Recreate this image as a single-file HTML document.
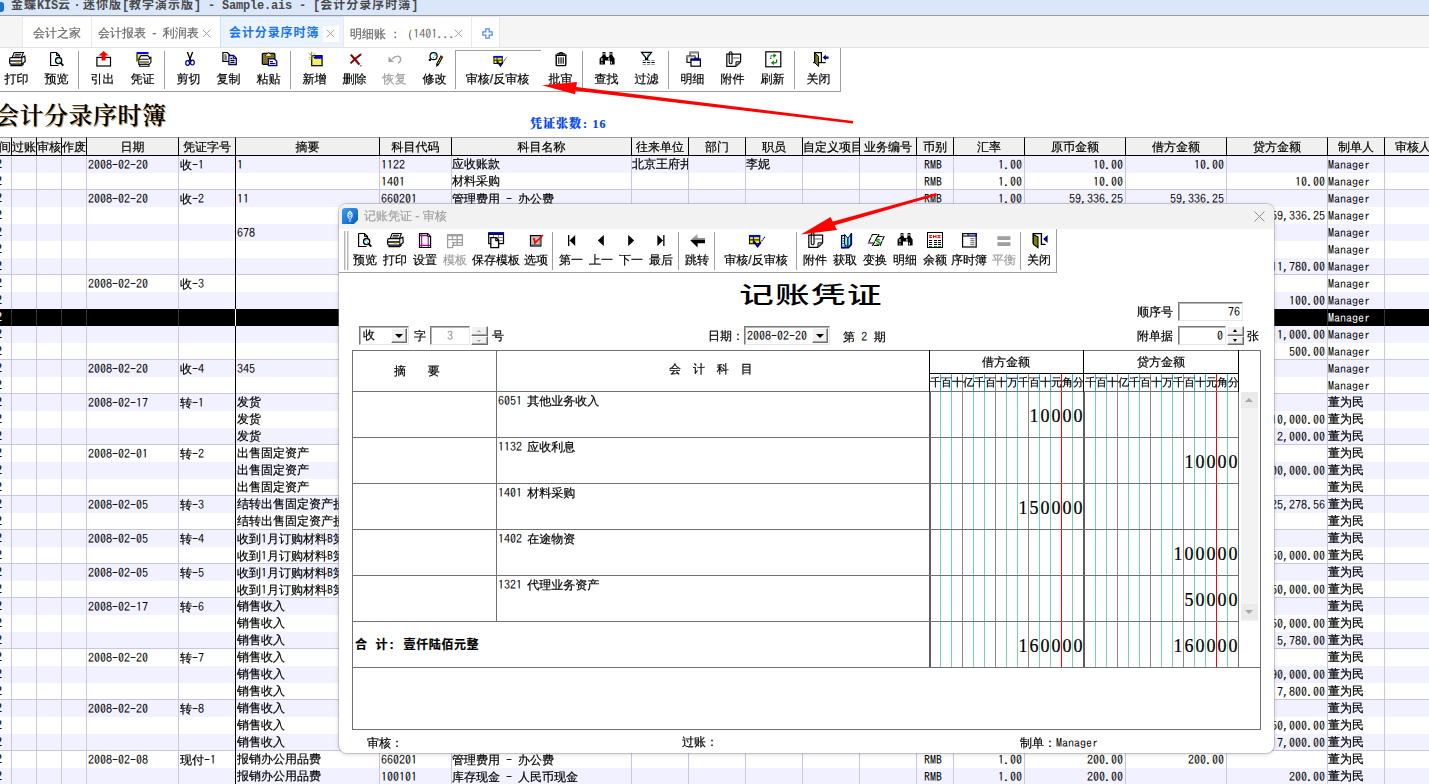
<!DOCTYPE html><html lang="zh"><head><meta charset="utf-8"><title>会计分录序时簿</title><style>
*{box-sizing:border-box;margin:0;padding:0}
html,body{width:1429px;height:784px;overflow:hidden;background:#fff}
body{position:relative;font:12px/12px "Liberation Sans","WenQuanYi Zen Hei","Noto Sans CJK SC",sans-serif;color:#000;-webkit-text-stroke:.2px currentColor}
.abs{position:absolute}
.t{position:absolute;white-space:nowrap;line-height:14px;height:14px}
.ser{font-family:"Liberation Serif","WenQuanYi Zen Hei","Noto Sans CJK SC",serif}
#titlebar{position:absolute;left:0;top:0;width:1429px;height:15px;background:#dae7fb;overflow:hidden}
#ttl,.tab.act,#bigt{-webkit-text-stroke:0}
#ttl i{font-style:normal;letter-spacing:-.2px}#ttl b{display:inline-block;width:12px;text-align:center;letter-spacing:0}
#titleline{position:absolute;left:0;top:15px;width:1429px;height:1px;background:#9c9c9c}
#tabstrip{position:absolute;left:0;top:16px;width:1429px;height:32px;background:#f5f5f5;border-bottom:1px solid #e3e3e3}
.tab{position:absolute;top:0;height:31px;background:#fff;border:1px solid #e9e9e9;border-bottom:none;color:#6a6a6a;line-height:33px;white-space:nowrap}
.tab.act{background:#ebf4fe;border-color:#c9e0f8;color:#1b76e6;font:bold 12px/33px "Liberation Sans","Noto Sans CJK SC",sans-serif;letter-spacing:.9px}
.tab .x{position:absolute;top:0;font-size:17px;color:#8a8a8a;font-weight:normal;letter-spacing:0}
#tb{position:absolute;left:0;top:48px;width:841px;height:44px;background:#fff;border-right:1px solid #a0a0a0;border-bottom:1px solid #a0a0a0}
.btn{position:absolute;top:0;height:43px;text-align:center}
.btn .lb{position:absolute;left:-20px;right:-20px;top:24px;line-height:14px;text-align:center;white-space:nowrap}
.btn svg{position:absolute;top:3px;left:50%;margin-left:-8px;width:16px;height:16px;overflow:visible}
.btn.dis{color:#a0a0a0}
.sep{position:absolute;width:1px;background:#a0a0a0}
/* grid */
.gh{position:absolute;top:137px;height:19px;background:#f0f0f0;border-top:1px solid #a0a0a0;border-bottom:1px solid #000;border-right:1px solid #000;text-align:center;line-height:18px;white-space:nowrap;overflow:hidden}
.row{position:absolute;left:0;width:1429px;height:17px}
.row.l{background:#f1f1ff}
.row.sel{background:#000;color:#fff}
.c{position:absolute;top:0;height:17px;line-height:17px;white-space:nowrap;overflow:hidden;word-spacing:2.7px}
.vl{position:absolute;top:156px;width:1px;height:628px;background:#c9c6e2}
.hl{position:absolute;left:0;width:1429px;height:1px;background:#c9c6e2}
.num{font-family:"IPAGothic","Liberation Mono",monospace;font-size:12px;text-align:right;-webkit-text-stroke:0}
.mono{font-family:"IPAGothic","Liberation Mono",monospace;font-size:12px;-webkit-text-stroke:0}
.m{font-family:"IPAGothic","Liberation Mono",monospace;font-size:12px;-webkit-text-stroke:0}
.xs{position:absolute;top:12px;width:9px;height:9px}
</style></head><body>
<div id="titlebar"><div class="abs" style="left:-4px;top:2px;width:8px;height:10px;border-radius:3px;background:#1c6fd0"></div><div class="t" id="ttl" style="left:11px;top:-1px;font:bold 12px/14px 'Liberation Mono','Noto Sans CJK SC',monospace;color:#4a4a4a;letter-spacing:1px">金蝶<i>KIS</i>云<b>·</b>迷你版<i>[</i>教学演示版<i>] - Sample.ais - [</i>会计分录序时簿<i>]</i></div></div><div id="titleline"></div>
<div id="tabstrip">
<div class="tab" style="left:22px;width:70px;padding-left:10px">会计之家</div>
<div class="tab" style="left:91px;width:130px;padding-left:6px;word-spacing:3px">会计报表 - 利润表<svg class="xs" style="left:110px" viewBox="0 0 10 10"><path d="M.8 .8L9.2 9.2M9.2 .8L.8 9.2" stroke="#9a9a9a" stroke-width="1" fill="none"/></svg></div>
<div class="tab act" style="left:220px;width:124px;padding-left:8px">会计分录序时簿<span class="abs" style="left:102px;top:9px;width:16px;height:16px;background:#fff"></span><svg class="xs" style="left:105px" viewBox="0 0 10 10"><path d="M.8 .8L9.2 9.2M9.2 .8L.8 9.2" stroke="#9a9a9a" stroke-width="1" fill="none"/></svg></div>
<div class="tab" style="left:343px;width:129px;padding-left:6px">明细账 ：（<span class="m">1401...</span><svg class="xs" style="left:110px" viewBox="0 0 10 10"><path d="M.8 .8L9.2 9.2M9.2 .8L.8 9.2" stroke="#9a9a9a" stroke-width="1" fill="none"/></svg></div>
<div class="tab" style="left:471px;width:29px"><svg class="abs" style="left:10px;top:11px" width="11" height="11" viewBox="0 0 13 13"><path d="M4.5 1H8.5V4.5H12V8.5H8.5V12H4.5V8.5H1V4.5H4.5Z" fill="#fff" stroke="#4c8be0" stroke-width="1.4"/></svg></div>
</div>
<div id="tb">
<div class="btn " style="left:-3.5px;width:40px"><svg viewBox="0 0 16 16" ><path d="M5.2 1.5H14.4L12.4 6.5H3.2Z" fill="#fff" stroke="#000" stroke-width="1.1"/><path d="M6 3.3H12M5.3 5H11.3" stroke="#000" stroke-width="1"/><path d="M2.2 6.6H12.6L15.8 5.2 16.2 10.4 12.8 13.2H2.2Q0.6 13.2 0.6 11.5V8.2Q0.6 6.6 2.2 6.6Z" fill="#fff" stroke="#000" stroke-width="1.2"/><path d="M12.8 6.8V13" stroke="#000" stroke-width="1"/><path d="M1 10H12.5" stroke="#000" stroke-width="1.3"/><path d="M2 13.2V14.6H12.6L14.6 12.8" fill="none" stroke="#000" stroke-width="1.2"/><rect x="7" y="10.8" width="3.2" height="1.2" fill="#e8d800"/></svg><span class="lb">打印</span></div>
<div class="btn " style="left:36.5px;width:40px"><svg viewBox="0 0 16 16" ><path d="M1.6 1.5H7.5L10.5 4.5V7M1.6 1.5V14.5H9.5" fill="none" stroke="#000" stroke-width="1.2"/><path d="M7.5 1.5V4.5H10.5" fill="none" stroke="#000" stroke-width="1"/><circle cx="9.6" cy="9.6" r="3.1" fill="#fff" stroke="#000" stroke-width="1.3"/><rect x="8.2" y="8" width="1.3" height="1.3" fill="#00e0e0"/><rect x="9.8" y="9.8" width="1.3" height="1.3" fill="#00e0e0"/><path d="M11.8 11.8L14.3 14.6" stroke="#000" stroke-width="1.8"/></svg><span class="lb">预览</span></div>
<div class="btn " style="left:82.5px;width:40px"><svg viewBox="0 0 16 16" ><rect x="1.9" y="6.4" width="13.6" height="8.6" fill="#fff" stroke="#000" stroke-width="1.2"/><path d="M8.6 0L13.8 4.6H10.6V9.6H6.6V4.6H3.4Z" fill="#ff0000"/></svg><span class="lb">引出</span></div>
<div class="btn " style="left:122.5px;width:40px"><svg viewBox="0 0 16 16" ><rect x="1.5" y="1" width="12" height="2.2" fill="#0000ff"/><rect x="1.5" y="3.2" width="12" height="7.3" fill="#e8e840"/><path d="M2 3V10.5" stroke="#000" stroke-width="1"/><path d="M6 4.6H12.6L14.6 6.4H15.9V11.4L14 13.4V15.2H4.6V13.4H3.8V8L6 4.6Z" fill="#fff" stroke="#000" stroke-width="1.1"/><path d="M4 8.2H13.6M4.6 11H14M13.8 8.2L15.6 6.6" stroke="#000" stroke-width="1.1" fill="none"/><rect x="8.5" y="11.8" width="3" height="1.3" fill="#e8d800"/><path d="M4.8 13.3H13.8" stroke="#000" stroke-width="1.2"/></svg><span class="lb">凭证</span></div>
<div class="btn " style="left:168.5px;width:40px"><svg viewBox="0 0 16 16" ><path d="M6.4 1L9 8M11.6 1L9 8M9 8L7.6 10.4M9 8L10.6 10.4" stroke="#000" stroke-width="1.3" fill="none"/><ellipse cx="6.6" cy="12" rx="1.9" ry="2.4" fill="none" stroke="#000090" stroke-width="1.2"/><ellipse cx="11.4" cy="11.6" rx="1.9" ry="2.4" fill="none" stroke="#000090" stroke-width="1.2"/></svg><span class="lb">剪切</span></div>
<div class="btn " style="left:208.5px;width:40px"><svg viewBox="0 0 16 16" ><path d="M1.9 1.5H6.3L8.6 3.8V10.3H1.9Z" fill="#fff" stroke="#000" stroke-width="1.2"/><path d="M3.3 4H5.5M3.3 6H6M3.3 8H6" stroke="#000" stroke-width="1"/><path d="M7.9 4.5H12.5L15.3 7.3V13.5H7.9Z" fill="#fff" stroke="#000080" stroke-width="1.3"/><path d="M12.3 4.6V7.4H15.2" fill="none" stroke="#000080" stroke-width="1"/><path d="M9.4 7.4H11.4M9.4 9.4H13.6M9.4 11.4H13.6" stroke="#000" stroke-width="1.1"/></svg><span class="lb">复制</span></div>
<div class="btn " style="left:248.5px;width:40px"><svg viewBox="0 0 16 16" ><rect x="1.3" y="2.4" width="12.6" height="11" rx="1" fill="#7c7420" stroke="#000" stroke-width="1.2"/><path d="M4.6 4.6L6.2 2.6Q7.6 0.6 9 2.6L10.6 4.6Z" fill="#f0e000" stroke="#000" stroke-width="1"/><rect x="5" y="3.6" width="5.4" height="1.2" fill="#fff"/><path d="M7.5 7.9H13.2L15.8 10.4V14.6H7.5Z" fill="#fff" stroke="#000080" stroke-width="1.3"/><path d="M9 10.6H12M9 12.6H14.4" stroke="#000080" stroke-width="1.2"/></svg><span class="lb">粘贴</span></div>
<div class="btn " style="left:294.5px;width:40px"><svg viewBox="0 0 16 16" ><rect x="4.7" y="4.7" width="10.4" height="10" fill="#f4f060" stroke="#000" stroke-width="1.2"/><rect x="8" y="5" width="7" height="2.8" fill="#0000ff"/><path d="M4.6 0.6V8.6M1.6 2.2L7.6 7M8.4 2.4L3 7.2" stroke="#707070" stroke-width=".8"/><rect x="2" y="2.4" width="1.2" height="1.2" fill="#e8d800"/><rect x="5.4" y="1.2" width="1.2" height="1.2" fill="#e8d800"/><rect x="1.8" y="6" width="1.2" height="1.2" fill="#e8d800"/><rect x="2.4" y="8" width="1" height="1" fill="#c0b000"/><rect x="7" y="6" width="1.4" height="1.4" fill="#000"/></svg><span class="lb">新增</span></div>
<div class="btn " style="left:334.5px;width:40px"><svg viewBox="0 0 16 16" ><path d="M3.8 3.6L7.6 8L12.4 13.6" stroke="#800000" stroke-width="2.1" fill="none"/><path d="M14 3.2L8 8L3.6 12.4" stroke="#800000" stroke-width="1.9" fill="none"/><path d="M12.6 4.2L14.4 2.8" stroke="#800000" stroke-width="1"/><rect x="13.2" y="14.2" width="1.2" height="1.2" fill="#800000"/></svg><span class="lb">删除</span></div>
<div class="btn dis" style="left:374.5px;width:40px"><svg viewBox="0 0 16 16" ><path d="M1.5 5.4V11H7.2Z" fill="#a4a4a4"/><path d="M5.2 8Q8 5 11 5.2Q13.7 5.6 13.7 8.3Q13.7 11 11 12.2" fill="none" stroke="#a4a4a4" stroke-width="1.3"/></svg><span class="lb">恢复</span></div>
<div class="btn " style="left:414.5px;width:40px"><svg viewBox="0 0 16 16" ><circle cx="6.6" cy="5.2" r="3.5" fill="#fff" stroke="#000" stroke-width="1.2"/><rect x="7.4" y="2.6" width="1.4" height="2.4" fill="#00e0e0"/><rect x="5.8" y="6" width="1.2" height="1.2" fill="#00e0e0"/><rect x="1.8" y="8" width="2" height="2" fill="#000"/><path d="M14 5L15.4 6.2L11.4 13.6L9.8 14.8L9.9 12.6Z" fill="#f0e000" stroke="#000" stroke-width="1.1"/><path d="M9.9 12.8L9.6 15.2L11.4 13.8Z" fill="#000"/><path d="M13.6 5.2L15.2 6.4" stroke="#c00000" stroke-width="1.2"/></svg><span class="lb">修改</span></div>
<div class="btn " style="left:454.5px;width:86px"><svg viewBox="0 0 16 16" ><g transform="translate(2.7 2.4) scale(.81 .86)"><rect x="1.5" y="3.5" width="10.2" height="8.2" fill="#f4ec00" stroke="#000" stroke-width="1.1"/><rect x="1" y="3" width="11.2" height="2.1" fill="#0000ff"/><path d="M1.5 7.9H11.7M5.4 5V11.6" stroke="#000" stroke-width="1"/><path d="M5.6 9.2L9.6 14.4L12.6 10.4" stroke="#000090" stroke-width="2" fill="none"/><path d="M12.4 10.6L17 4.8" stroke="#000090" stroke-width="1.1" stroke-dasharray="1.4 .6" fill="none"/></g></svg><span class="lb">审核/反审核</span></div>
<div class="btn " style="left:540.5px;width:40px"><svg viewBox="0 0 16 16" ><path d="M2.4 4.2H13.6" stroke="#000" stroke-width="1.6"/><path d="M5.6 2.6Q8 0.6 10.4 2.6" stroke="#000" stroke-width="1.3" fill="none"/><path d="M4 2.8H12" stroke="#000" stroke-width="1.1"/><path d="M3.2 5V13.4Q3.2 14.6 4.4 14.6H11.6Q12.8 14.6 12.8 13.4V5" fill="#fff" stroke="#000" stroke-width="1.4"/><path d="M5.8 6.2V12.8M8 6.2V12.8M10.2 6.2V12.8" stroke="#000" stroke-width="1.1"/></svg><span class="lb">批审</span></div>
<div class="btn " style="left:586.5px;width:40px"><svg viewBox="0 0 16 16" ><path d="M3.6 1H6.4V4L7.4 6H9.6L10.6 4V1H13.4V4.4L15.6 7.4V13.6H11V9.4H6V13.6H0.6V7.4L3.6 4.4Z" fill="#000"/><rect x="4.4" y="2" width="1.1" height="1.6" fill="#fff"/><rect x="11.4" y="2" width="1.1" height="1.6" fill="#fff"/><rect x="2.4" y="7" width="1.1" height="3" fill="#fff"/><rect x="9.4" y="6.6" width="1.1" height="2.4" fill="#fff"/><rect x="2.4" y="11.4" width="1.1" height="1.2" fill="#fff"/><rect x="11.8" y="10.6" width="1.1" height="2" fill="#fff"/></svg><span class="lb">查找</span></div>
<div class="btn " style="left:626.5px;width:40px"><svg viewBox="0 0 16 16" ><path d="M2.6 1.3H12.4L8.6 6.4V8.6H6.6V6.4Z" fill="#fff" stroke="#000" stroke-width="1.3"/><path d="M8.4 5L9.6 2.4" stroke="#00c0c0" stroke-width="1"/><path d="M7 7.6H8.4" stroke="#000" stroke-width="1.6"/><path d="M3.6 9.5H15.6M3.6 13.5H15.6" stroke="#909090" stroke-width="1" stroke-dasharray="3.2 1.2"/><path d="M3.6 11.5H15.6" stroke="#000" stroke-width="1.1" stroke-dasharray="3.2 1.2"/></svg><span class="lb">过滤</span></div>
<div class="btn " style="left:672.5px;width:40px"><svg viewBox="0 0 16 16" ><rect x="5" y="1.2" width="8.4" height="6" fill="#fff" stroke="#000" stroke-width="1"/><rect x="4.6" y="0.8" width="9.2" height="1.8" fill="#8c8c8c"/><rect x="2" y="5" width="8" height="6.4" fill="#fff" stroke="#000" stroke-width="1.1"/><rect x="1.6" y="4.6" width="8.2" height="1.8" fill="#8c8c8c"/><rect x="6" y="8.2" width="9.4" height="7" fill="#fff" stroke="#000" stroke-width="1.2"/><rect x="5.6" y="7.6" width="10.2" height="2.2" fill="#000080"/></svg><span class="lb">明细</span></div>
<div class="btn " style="left:712.5px;width:40px"><svg viewBox="0 0 16 16" ><path d="M1.8 3.2H15.6V10.6L10.6 15.4H1.8Z" fill="#fff" stroke="#000" stroke-width="1.2"/><path d="M15.4 10.8H11V15" fill="none" stroke="#000" stroke-width="1"/><path d="M11 15.2L15.6 10.8" stroke="#404040" stroke-width="1.6"/><path d="M4.2 9V2.2Q4.2 0.8 5.6 0.8Q7 0.8 7 2.2V11.4Q7 12.8 5.8 12.8Q4.2 12.8 4.2 11.2V9" fill="none" stroke="#000" stroke-width="1.1"/><path d="M8.2 7H14.6M7.6 5.6V11.6" stroke="#606060" stroke-width="1"/></svg><span class="lb">附件</span></div>
<div class="btn " style="left:752.5px;width:40px"><svg viewBox="0 0 16 16" ><rect x="0.8" y="0.8" width="15" height="15" fill="#fff" stroke="#000" stroke-width="1.2"/><path d="M5.6 8V6Q5.6 4.6 7 4.6H9" fill="none" stroke="#008000" stroke-width="1.3" stroke-dasharray="1.6 .7"/><path d="M8.6 2.2L11.4 4.6L8.6 7Z" fill="#008000"/><path d="M11.6 8.4V10.4Q11.6 11.8 10.2 11.8H8.6" fill="none" stroke="#008000" stroke-width="1.3"/><path d="M8.8 9.4L6 11.8L8.8 14.2Z" fill="#008000"/></svg><span class="lb">刷新</span></div>
<div class="btn " style="left:798.5px;width:40px"><svg viewBox="0 0 16 16" ><path d="M3.6 11.6V1.6H10.4V11.6" fill="#fff" stroke="#000" stroke-width="1.2"/><path d="M2 11.6H14.6" stroke="#000" stroke-width="1.2"/><path d="M3.8 2.2L7.6 5.4V15.4L3.8 11.8Z" fill="#808000" stroke="#000" stroke-width="1"/><path d="M11.8 6.6L14.8 3.6V5.4H17.6V7.8H14.8V9.6Z" fill="#000090"/></svg><span class="lb">关闭</span></div>
<div class="sep" style="left:78px;top:3px;height:38px"></div>
<div class="sep" style="left:164px;top:3px;height:38px"></div>
<div class="sep" style="left:290px;top:3px;height:38px"></div>
<div class="sep" style="left:582px;top:3px;height:38px"></div>
<div class="sep" style="left:668px;top:3px;height:38px"></div>
<div class="sep" style="left:794px;top:3px;height:38px"></div>
<div class="abs" style="left:455px;top:2px;width:86px;height:39px;border-left:1px solid #a0a0a0;border-top:1px solid #a0a0a0"></div>
</div>
<div class="t" style="left:-5px;top:100px;height:32px;line-height:32px;font:600 24px/32px 'Liberation Serif','Noto Serif CJK SC',serif;letter-spacing:.5px;-webkit-text-stroke:0;text-shadow:1px 1px 0 #c9a46a">会计分录序时簿</div>
<div class="t" style="left:530px;top:116.5px;font:900 12px/14px 'Liberation Serif','Noto Serif CJK SC',serif;color:#0648e8;letter-spacing:1px">凭证张数<span style="font-weight:bold;letter-spacing:1.2px;padding-left:1px">: 16</span></div>
<div class="gh" style="left:-13px;width:25px">期间</div>
<div class="gh" style="left:12px;width:25px">过账</div>
<div class="gh" style="left:37px;width:25px">审核</div>
<div class="gh" style="left:62px;width:25px">作废</div>
<div class="gh" style="left:87px;width:92px">日期</div>
<div class="gh" style="left:179px;width:57px">凭证字号</div>
<div class="gh" style="left:236px;width:144px">摘要</div>
<div class="gh" style="left:380px;width:72px">科目代码</div>
<div class="gh" style="left:452px;width:180px">科目名称</div>
<div class="gh" style="left:632px;width:57px">往来单位</div>
<div class="gh" style="left:689px;width:57px">部门</div>
<div class="gh" style="left:746px;width:57px">职员</div>
<div class="gh" style="left:803px;width:57px">自定义项目</div>
<div class="gh" style="left:860px;width:57px">业务编号</div>
<div class="gh" style="left:917px;width:37px">币别</div>
<div class="gh" style="left:954px;width:71px">汇率</div>
<div class="gh" style="left:1025px;width:101px">原币金额</div>
<div class="gh" style="left:1126px;width:101px">借方金额</div>
<div class="gh" style="left:1227px;width:101px">贷方金额</div>
<div class="gh" style="left:1328px;width:57px">制单人</div>
<div class="gh" style="left:1385px;width:57px">审核人</div>
<div class="row l" style="top:156px"><span class="c" style="left:-12px;width:14px;text-align:right">2</span><span class="c mono" style="left:88px;width:90px">2008-02-20</span><span class="c" style="left:180px;width:55px">收<span class="m">-1</span></span><span class="c" style="left:237px;width:142px"><span class="m">1</span></span><span class="c mono" style="left:381px;width:70px">1122</span><span class="c" style="left:452px;width:179px">应收账款</span><span class="c" style="left:632px;width:56px">北京王府井</span><span class="c" style="left:746px;width:56px">李妮</span><span class="c mono" style="left:924px;width:29px">RMB</span><span class="c num" style="left:953px;width:69px">1.00</span><span class="c num" style="left:1024px;width:99px">10.00</span><span class="c num" style="left:1125px;width:99px">10.00</span><span class="c mono" style="left:1328px;width:56px">Manager</span></div>
<div class="row" style="top:173px"><span class="c" style="left:-12px;width:14px;text-align:right">2</span><span class="c mono" style="left:381px;width:70px">1401</span><span class="c" style="left:452px;width:179px">材料采购</span><span class="c mono" style="left:924px;width:29px">RMB</span><span class="c num" style="left:953px;width:69px">1.00</span><span class="c num" style="left:1024px;width:99px">10.00</span><span class="c num" style="left:1226px;width:99px">10.00</span><span class="c mono" style="left:1328px;width:56px">Manager</span></div>
<div class="row l" style="top:190px"><span class="c" style="left:-12px;width:14px;text-align:right">2</span><span class="c mono" style="left:88px;width:90px">2008-02-20</span><span class="c" style="left:180px;width:55px">收<span class="m">-2</span></span><span class="c" style="left:237px;width:142px"><span class="m">11</span></span><span class="c mono" style="left:381px;width:70px">660201</span><span class="c" style="left:452px;width:179px">管理费用 <span class="m">-</span> 办公费</span><span class="c mono" style="left:924px;width:29px">RMB</span><span class="c num" style="left:953px;width:69px">1.00</span><span class="c num" style="left:1024px;width:99px">59,336.25</span><span class="c num" style="left:1125px;width:99px">59,336.25</span><span class="c mono" style="left:1328px;width:56px">Manager</span></div>
<div class="row" style="top:207px"><span class="c" style="left:-12px;width:14px;text-align:right">2</span><span class="c mono" style="left:381px;width:70px">100201</span><span class="c" style="left:452px;width:179px">银行存款 <span class="m">-</span> 工行存款</span><span class="c mono" style="left:924px;width:29px">RMB</span><span class="c num" style="left:953px;width:69px">1.00</span><span class="c num" style="left:1024px;width:99px">59,336.25</span><span class="c num" style="left:1226px;width:99px">59,336.25</span><span class="c mono" style="left:1328px;width:56px">Manager</span></div>
<div class="row l" style="top:224px"><span class="c" style="left:-12px;width:14px;text-align:right">2</span><span class="c" style="left:237px;width:142px"><span class="m">678</span></span><span class="c mono" style="left:381px;width:70px">660202</span><span class="c" style="left:452px;width:179px">管理费用 <span class="m">-</span> 差旅费</span><span class="c mono" style="left:924px;width:29px">RMB</span><span class="c num" style="left:953px;width:69px">1.00</span><span class="c num" style="left:1024px;width:99px">1,780.00</span><span class="c num" style="left:1125px;width:99px">1,780.00</span><span class="c mono" style="left:1328px;width:56px">Manager</span></div>
<div class="row" style="top:241px"><span class="c" style="left:-12px;width:14px;text-align:right">2</span><span class="c mono" style="left:381px;width:70px">660203</span><span class="c" style="left:452px;width:179px">管理费用 <span class="m">-</span> 招待费</span><span class="c mono" style="left:924px;width:29px">RMB</span><span class="c num" style="left:953px;width:69px">1.00</span><span class="c num" style="left:1024px;width:99px">10,000.00</span><span class="c num" style="left:1125px;width:99px">10,000.00</span><span class="c mono" style="left:1328px;width:56px">Manager</span></div>
<div class="row l" style="top:258px"><span class="c" style="left:-12px;width:14px;text-align:right">2</span><span class="c mono" style="left:381px;width:70px">100101</span><span class="c" style="left:452px;width:179px">库存现金 <span class="m">-</span> 人民币现金</span><span class="c mono" style="left:924px;width:29px">RMB</span><span class="c num" style="left:953px;width:69px">1.00</span><span class="c num" style="left:1024px;width:99px">11,780.00</span><span class="c num" style="left:1226px;width:99px">11,780.00</span><span class="c mono" style="left:1328px;width:56px">Manager</span></div>
<div class="row" style="top:275px"><span class="c" style="left:-12px;width:14px;text-align:right">2</span><span class="c mono" style="left:88px;width:90px">2008-02-20</span><span class="c" style="left:180px;width:55px">收<span class="m">-3</span></span><span class="c mono" style="left:381px;width:70px">6051</span><span class="c" style="left:452px;width:179px">其他业务收入</span><span class="c mono" style="left:924px;width:29px">RMB</span><span class="c num" style="left:953px;width:69px">1.00</span><span class="c num" style="left:1024px;width:99px">100.00</span><span class="c num" style="left:1125px;width:99px">100.00</span><span class="c mono" style="left:1328px;width:56px">Manager</span></div>
<div class="row l" style="top:292px"><span class="c" style="left:-12px;width:14px;text-align:right">2</span><span class="c mono" style="left:381px;width:70px">1132</span><span class="c" style="left:452px;width:179px">应收利息</span><span class="c mono" style="left:924px;width:29px">RMB</span><span class="c num" style="left:953px;width:69px">1.00</span><span class="c num" style="left:1024px;width:99px">100.00</span><span class="c num" style="left:1226px;width:99px">100.00</span><span class="c mono" style="left:1328px;width:56px">Manager</span></div>
<div class="row sel" style="top:309px"><span class="c" style="left:-12px;width:14px;text-align:right">2</span><span class="c mono" style="left:381px;width:70px">1401</span><span class="c" style="left:452px;width:179px">材料采购</span><span class="c mono" style="left:924px;width:29px">RMB</span><span class="c num" style="left:953px;width:69px">1.00</span><span class="c num" style="left:1024px;width:99px">1,500.00</span><span class="c num" style="left:1125px;width:99px">1,500.00</span><span class="c mono" style="left:1328px;width:56px">Manager</span></div>
<div class="row l" style="top:326px"><span class="c" style="left:-12px;width:14px;text-align:right">2</span><span class="c mono" style="left:381px;width:70px">1402</span><span class="c" style="left:452px;width:179px">在途物资</span><span class="c mono" style="left:924px;width:29px">RMB</span><span class="c num" style="left:953px;width:69px">1.00</span><span class="c num" style="left:1024px;width:99px">1,000.00</span><span class="c num" style="left:1226px;width:99px">1,000.00</span><span class="c mono" style="left:1328px;width:56px">Manager</span></div>
<div class="row" style="top:343px"><span class="c" style="left:-12px;width:14px;text-align:right">2</span><span class="c mono" style="left:381px;width:70px">1321</span><span class="c" style="left:452px;width:179px">代理业务资产</span><span class="c mono" style="left:924px;width:29px">RMB</span><span class="c num" style="left:953px;width:69px">1.00</span><span class="c num" style="left:1024px;width:99px">500.00</span><span class="c num" style="left:1226px;width:99px">500.00</span><span class="c mono" style="left:1328px;width:56px">Manager</span></div>
<div class="row l" style="top:360px"><span class="c" style="left:-12px;width:14px;text-align:right">2</span><span class="c mono" style="left:88px;width:90px">2008-02-20</span><span class="c" style="left:180px;width:55px">收<span class="m">-4</span></span><span class="c" style="left:237px;width:142px"><span class="m">345</span></span><span class="c mono" style="left:381px;width:70px">1001</span><span class="c" style="left:452px;width:179px">库存现金</span><span class="c mono" style="left:924px;width:29px">RMB</span><span class="c num" style="left:953px;width:69px">1.00</span><span class="c num" style="left:1024px;width:99px">345.00</span><span class="c num" style="left:1125px;width:99px">345.00</span><span class="c mono" style="left:1328px;width:56px">Manager</span></div>
<div class="row" style="top:377px"><span class="c" style="left:-12px;width:14px;text-align:right">2</span><span class="c mono" style="left:381px;width:70px">1002</span><span class="c" style="left:452px;width:179px">银行存款</span><span class="c mono" style="left:924px;width:29px">RMB</span><span class="c num" style="left:953px;width:69px">1.00</span><span class="c num" style="left:1024px;width:99px">345.00</span><span class="c num" style="left:1125px;width:99px">345.00</span><span class="c mono" style="left:1328px;width:56px">Manager</span></div>
<div class="row l" style="top:394px"><span class="c" style="left:-12px;width:14px;text-align:right">2</span><span class="c mono" style="left:88px;width:90px">2008-02-17</span><span class="c" style="left:180px;width:55px">转<span class="m">-1</span></span><span class="c" style="left:237px;width:142px">发货</span><span class="c mono" style="left:381px;width:70px">1122</span><span class="c" style="left:452px;width:179px">应收账款</span><span class="c mono" style="left:924px;width:29px">RMB</span><span class="c num" style="left:953px;width:69px">1.00</span><span class="c num" style="left:1024px;width:99px">12,000.00</span><span class="c num" style="left:1125px;width:99px">12,000.00</span><span class="c" style="left:1328px;width:56px">董为民</span></div>
<div class="row" style="top:411px"><span class="c" style="left:-12px;width:14px;text-align:right">2</span><span class="c" style="left:237px;width:142px">发货</span><span class="c mono" style="left:381px;width:70px">6001</span><span class="c" style="left:452px;width:179px">主营业务收入</span><span class="c mono" style="left:924px;width:29px">RMB</span><span class="c num" style="left:953px;width:69px">1.00</span><span class="c num" style="left:1024px;width:99px">10,000.00</span><span class="c num" style="left:1226px;width:99px">10,000.00</span><span class="c" style="left:1328px;width:56px">董为民</span></div>
<div class="row l" style="top:428px"><span class="c" style="left:-12px;width:14px;text-align:right">2</span><span class="c" style="left:237px;width:142px">发货</span><span class="c mono" style="left:381px;width:70px">222101</span><span class="c" style="left:452px;width:179px">应交税费 <span class="m">-</span> 增值税</span><span class="c mono" style="left:924px;width:29px">RMB</span><span class="c num" style="left:953px;width:69px">1.00</span><span class="c num" style="left:1024px;width:99px">2,000.00</span><span class="c num" style="left:1226px;width:99px">2,000.00</span><span class="c" style="left:1328px;width:56px">董为民</span></div>
<div class="row" style="top:445px"><span class="c" style="left:-12px;width:14px;text-align:right">2</span><span class="c mono" style="left:88px;width:90px">2008-02-01</span><span class="c" style="left:180px;width:55px">转<span class="m">-2</span></span><span class="c" style="left:237px;width:142px">出售固定资产</span><span class="c mono" style="left:381px;width:70px">1606</span><span class="c" style="left:452px;width:179px">固定资产清理</span><span class="c mono" style="left:924px;width:29px">RMB</span><span class="c num" style="left:953px;width:69px">1.00</span><span class="c num" style="left:1024px;width:99px">300,000.00</span><span class="c num" style="left:1125px;width:99px">300,000.00</span><span class="c" style="left:1328px;width:56px">董为民</span></div>
<div class="row l" style="top:462px"><span class="c" style="left:-12px;width:14px;text-align:right">2</span><span class="c" style="left:237px;width:142px">出售固定资产</span><span class="c mono" style="left:381px;width:70px">1601</span><span class="c" style="left:452px;width:179px">固定资产</span><span class="c mono" style="left:924px;width:29px">RMB</span><span class="c num" style="left:953px;width:69px">1.00</span><span class="c num" style="left:1024px;width:99px">500,000.00</span><span class="c num" style="left:1226px;width:99px">500,000.00</span><span class="c" style="left:1328px;width:56px">董为民</span></div>
<div class="row" style="top:479px"><span class="c" style="left:-12px;width:14px;text-align:right">2</span><span class="c" style="left:237px;width:142px">出售固定资产</span><span class="c mono" style="left:381px;width:70px">1602</span><span class="c" style="left:452px;width:179px">累计折旧</span><span class="c mono" style="left:924px;width:29px">RMB</span><span class="c num" style="left:953px;width:69px">1.00</span><span class="c num" style="left:1024px;width:99px">200,000.00</span><span class="c num" style="left:1125px;width:99px">200,000.00</span><span class="c" style="left:1328px;width:56px">董为民</span></div>
<div class="row l" style="top:496px"><span class="c" style="left:-12px;width:14px;text-align:right">2</span><span class="c mono" style="left:88px;width:90px">2008-02-05</span><span class="c" style="left:180px;width:55px">转<span class="m">-3</span></span><span class="c" style="left:237px;width:142px">结转出售固定资产损益</span><span class="c mono" style="left:381px;width:70px">1606</span><span class="c" style="left:452px;width:179px">固定资产清理</span><span class="c mono" style="left:924px;width:29px">RMB</span><span class="c num" style="left:953px;width:69px">1.00</span><span class="c num" style="left:1024px;width:99px">25,278.56</span><span class="c num" style="left:1226px;width:99px">25,278.56</span><span class="c" style="left:1328px;width:56px">董为民</span></div>
<div class="row" style="top:513px"><span class="c" style="left:-12px;width:14px;text-align:right">2</span><span class="c" style="left:237px;width:142px">结转出售固定资产损益</span><span class="c mono" style="left:381px;width:70px">6711</span><span class="c" style="left:452px;width:179px">营业外支出</span><span class="c mono" style="left:924px;width:29px">RMB</span><span class="c num" style="left:953px;width:69px">1.00</span><span class="c num" style="left:1024px;width:99px">25,278.56</span><span class="c num" style="left:1125px;width:99px">25,278.56</span><span class="c" style="left:1328px;width:56px">董为民</span></div>
<div class="row l" style="top:530px"><span class="c" style="left:-12px;width:14px;text-align:right">2</span><span class="c mono" style="left:88px;width:90px">2008-02-05</span><span class="c" style="left:180px;width:55px">转<span class="m">-4</span></span><span class="c" style="left:237px;width:142px">收到<span class="m">1</span>月订购材料<span class="m">B</span>第一批</span><span class="c mono" style="left:381px;width:70px">1403</span><span class="c" style="left:452px;width:179px">原材料</span><span class="c mono" style="left:924px;width:29px">RMB</span><span class="c num" style="left:953px;width:69px">1.00</span><span class="c num" style="left:1024px;width:99px">50,000.00</span><span class="c num" style="left:1125px;width:99px">50,000.00</span><span class="c" style="left:1328px;width:56px">董为民</span></div>
<div class="row" style="top:547px"><span class="c" style="left:-12px;width:14px;text-align:right">2</span><span class="c" style="left:237px;width:142px">收到<span class="m">1</span>月订购材料<span class="m">B</span>第一批</span><span class="c mono" style="left:381px;width:70px">1402</span><span class="c" style="left:452px;width:179px">在途物资</span><span class="c mono" style="left:924px;width:29px">RMB</span><span class="c num" style="left:953px;width:69px">1.00</span><span class="c num" style="left:1024px;width:99px">50,000.00</span><span class="c num" style="left:1226px;width:99px">50,000.00</span><span class="c" style="left:1328px;width:56px">董为民</span></div>
<div class="row l" style="top:564px"><span class="c" style="left:-12px;width:14px;text-align:right">2</span><span class="c mono" style="left:88px;width:90px">2008-02-05</span><span class="c" style="left:180px;width:55px">转<span class="m">-5</span></span><span class="c" style="left:237px;width:142px">收到<span class="m">1</span>月订购材料<span class="m">B</span>第二批</span><span class="c mono" style="left:381px;width:70px">1403</span><span class="c" style="left:452px;width:179px">原材料</span><span class="c mono" style="left:924px;width:29px">RMB</span><span class="c num" style="left:953px;width:69px">1.00</span><span class="c num" style="left:1024px;width:99px">50,000.00</span><span class="c num" style="left:1125px;width:99px">50,000.00</span><span class="c" style="left:1328px;width:56px">董为民</span></div>
<div class="row" style="top:581px"><span class="c" style="left:-12px;width:14px;text-align:right">2</span><span class="c" style="left:237px;width:142px">收到<span class="m">1</span>月订购材料<span class="m">B</span>第二批</span><span class="c mono" style="left:381px;width:70px">1402</span><span class="c" style="left:452px;width:179px">在途物资</span><span class="c mono" style="left:924px;width:29px">RMB</span><span class="c num" style="left:953px;width:69px">1.00</span><span class="c num" style="left:1024px;width:99px">50,000.00</span><span class="c num" style="left:1226px;width:99px">50,000.00</span><span class="c" style="left:1328px;width:56px">董为民</span></div>
<div class="row l" style="top:598px"><span class="c" style="left:-12px;width:14px;text-align:right">2</span><span class="c mono" style="left:88px;width:90px">2008-02-17</span><span class="c" style="left:180px;width:55px">转<span class="m">-6</span></span><span class="c" style="left:237px;width:142px">销售收入</span><span class="c mono" style="left:381px;width:70px">1122</span><span class="c" style="left:452px;width:179px">应收账款</span><span class="c mono" style="left:924px;width:29px">RMB</span><span class="c num" style="left:953px;width:69px">1.00</span><span class="c num" style="left:1024px;width:99px">55,780.00</span><span class="c num" style="left:1125px;width:99px">55,780.00</span><span class="c" style="left:1328px;width:56px">董为民</span></div>
<div class="row" style="top:615px"><span class="c" style="left:-12px;width:14px;text-align:right">2</span><span class="c" style="left:237px;width:142px">销售收入</span><span class="c mono" style="left:381px;width:70px">6001</span><span class="c" style="left:452px;width:179px">主营业务收入</span><span class="c mono" style="left:924px;width:29px">RMB</span><span class="c num" style="left:953px;width:69px">1.00</span><span class="c num" style="left:1024px;width:99px">50,000.00</span><span class="c num" style="left:1226px;width:99px">50,000.00</span><span class="c" style="left:1328px;width:56px">董为民</span></div>
<div class="row l" style="top:632px"><span class="c" style="left:-12px;width:14px;text-align:right">2</span><span class="c" style="left:237px;width:142px">销售收入</span><span class="c mono" style="left:381px;width:70px">222101</span><span class="c" style="left:452px;width:179px">应交税费 <span class="m">-</span> 增值税</span><span class="c mono" style="left:924px;width:29px">RMB</span><span class="c num" style="left:953px;width:69px">1.00</span><span class="c num" style="left:1024px;width:99px">5,780.00</span><span class="c num" style="left:1226px;width:99px">5,780.00</span><span class="c" style="left:1328px;width:56px">董为民</span></div>
<div class="row" style="top:649px"><span class="c" style="left:-12px;width:14px;text-align:right">2</span><span class="c mono" style="left:88px;width:90px">2008-02-20</span><span class="c" style="left:180px;width:55px">转<span class="m">-7</span></span><span class="c" style="left:237px;width:142px">销售收入</span><span class="c mono" style="left:381px;width:70px">1122</span><span class="c" style="left:452px;width:179px">应收账款</span><span class="c mono" style="left:924px;width:29px">RMB</span><span class="c num" style="left:953px;width:69px">1.00</span><span class="c num" style="left:1024px;width:99px">97,800.00</span><span class="c num" style="left:1125px;width:99px">97,800.00</span><span class="c" style="left:1328px;width:56px">董为民</span></div>
<div class="row l" style="top:666px"><span class="c" style="left:-12px;width:14px;text-align:right">2</span><span class="c" style="left:237px;width:142px">销售收入</span><span class="c mono" style="left:381px;width:70px">6001</span><span class="c" style="left:452px;width:179px">主营业务收入</span><span class="c mono" style="left:924px;width:29px">RMB</span><span class="c num" style="left:953px;width:69px">1.00</span><span class="c num" style="left:1024px;width:99px">90,000.00</span><span class="c num" style="left:1226px;width:99px">90,000.00</span><span class="c" style="left:1328px;width:56px">董为民</span></div>
<div class="row" style="top:683px"><span class="c" style="left:-12px;width:14px;text-align:right">2</span><span class="c" style="left:237px;width:142px">销售收入</span><span class="c mono" style="left:381px;width:70px">222101</span><span class="c" style="left:452px;width:179px">应交税费 <span class="m">-</span> 增值税</span><span class="c mono" style="left:924px;width:29px">RMB</span><span class="c num" style="left:953px;width:69px">1.00</span><span class="c num" style="left:1024px;width:99px">7,800.00</span><span class="c num" style="left:1226px;width:99px">7,800.00</span><span class="c" style="left:1328px;width:56px">董为民</span></div>
<div class="row l" style="top:700px"><span class="c" style="left:-12px;width:14px;text-align:right">2</span><span class="c mono" style="left:88px;width:90px">2008-02-20</span><span class="c" style="left:180px;width:55px">转<span class="m">-8</span></span><span class="c" style="left:237px;width:142px">销售收入</span><span class="c mono" style="left:381px;width:70px">1122</span><span class="c" style="left:452px;width:179px">应收账款</span><span class="c mono" style="left:924px;width:29px">RMB</span><span class="c num" style="left:953px;width:69px">1.00</span><span class="c num" style="left:1024px;width:99px">57,000.00</span><span class="c num" style="left:1125px;width:99px">57,000.00</span><span class="c" style="left:1328px;width:56px">董为民</span></div>
<div class="row" style="top:717px"><span class="c" style="left:-12px;width:14px;text-align:right">2</span><span class="c" style="left:237px;width:142px">销售收入</span><span class="c mono" style="left:381px;width:70px">6001</span><span class="c" style="left:452px;width:179px">主营业务收入</span><span class="c mono" style="left:924px;width:29px">RMB</span><span class="c num" style="left:953px;width:69px">1.00</span><span class="c num" style="left:1024px;width:99px">50,000.00</span><span class="c num" style="left:1226px;width:99px">50,000.00</span><span class="c" style="left:1328px;width:56px">董为民</span></div>
<div class="row l" style="top:734px"><span class="c" style="left:-12px;width:14px;text-align:right">2</span><span class="c" style="left:237px;width:142px">销售收入</span><span class="c mono" style="left:381px;width:70px">222101</span><span class="c" style="left:452px;width:179px">应交税费 <span class="m">-</span> 增值税</span><span class="c mono" style="left:924px;width:29px">RMB</span><span class="c num" style="left:953px;width:69px">1.00</span><span class="c num" style="left:1024px;width:99px">7,000.00</span><span class="c num" style="left:1226px;width:99px">7,000.00</span><span class="c" style="left:1328px;width:56px">董为民</span></div>
<div class="row" style="top:751px"><span class="c" style="left:-12px;width:14px;text-align:right">2</span><span class="c mono" style="left:88px;width:90px">2008-02-08</span><span class="c" style="left:180px;width:55px">现付<span class="m">-1</span></span><span class="c" style="left:237px;width:142px">报销办公用品费</span><span class="c mono" style="left:381px;width:70px">660201</span><span class="c" style="left:452px;width:179px">管理费用 <span class="m">-</span> 办公费</span><span class="c mono" style="left:924px;width:29px">RMB</span><span class="c num" style="left:953px;width:69px">1.00</span><span class="c num" style="left:1024px;width:99px">200.00</span><span class="c num" style="left:1125px;width:99px">200.00</span><span class="c" style="left:1328px;width:56px">董为民</span></div>
<div class="row l" style="top:768px"><span class="c" style="left:-12px;width:14px;text-align:right">2</span><span class="c" style="left:237px;width:142px">报销办公用品费</span><span class="c mono" style="left:381px;width:70px">100101</span><span class="c" style="left:452px;width:179px">库存现金 <span class="m">-</span> 人民币现金</span><span class="c mono" style="left:924px;width:29px">RMB</span><span class="c num" style="left:953px;width:69px">1.00</span><span class="c num" style="left:1024px;width:99px">200.00</span><span class="c num" style="left:1226px;width:99px">200.00</span><span class="c" style="left:1328px;width:56px">董为民</span></div>
<div class="hl" style="top:189px"></div>
<div class="hl" style="top:274px"></div>
<div class="hl" style="top:359px"></div>
<div class="hl" style="top:393px"></div>
<div class="hl" style="top:444px"></div>
<div class="hl" style="top:495px"></div>
<div class="hl" style="top:529px"></div>
<div class="hl" style="top:563px"></div>
<div class="hl" style="top:597px"></div>
<div class="hl" style="top:648px"></div>
<div class="hl" style="top:699px"></div>
<div class="hl" style="top:750px"></div>
<div class="vl" style="left:11px"></div>
<div class="vl" style="left:36px"></div>
<div class="vl" style="left:61px"></div>
<div class="vl" style="left:86px"></div>
<div class="vl" style="left:178px"></div>
<div class="vl" style="left:235px;background:#000"></div>
<div class="vl" style="left:379px"></div>
<div class="vl" style="left:451px"></div>
<div class="vl" style="left:631px"></div>
<div class="vl" style="left:688px"></div>
<div class="vl" style="left:745px"></div>
<div class="vl" style="left:802px"></div>
<div class="vl" style="left:859px"></div>
<div class="vl" style="left:916px"></div>
<div class="vl" style="left:953px"></div>
<div class="vl" style="left:1024px"></div>
<div class="vl" style="left:1125px"></div>
<div class="vl" style="left:1226px"></div>
<div class="vl" style="left:1327px"></div>
<div class="vl" style="left:1384px"></div>
<div class="vl" style="left:1441px"></div>
<div class="abs" style="left:11px;top:309px;width:1px;height:17px;background:#36391d"></div>
<div class="abs" style="left:36px;top:309px;width:1px;height:17px;background:#36391d"></div>
<div class="abs" style="left:61px;top:309px;width:1px;height:17px;background:#36391d"></div>
<div class="abs" style="left:86px;top:309px;width:1px;height:17px;background:#36391d"></div>
<div class="abs" style="left:178px;top:309px;width:1px;height:17px;background:#36391d"></div>
<div class="abs" style="left:235px;top:309px;width:1px;height:17px;background:#fff"></div>
<div class="abs" style="left:379px;top:309px;width:1px;height:17px;background:#36391d"></div>
<div class="abs" style="left:451px;top:309px;width:1px;height:17px;background:#36391d"></div>
<div class="abs" style="left:631px;top:309px;width:1px;height:17px;background:#36391d"></div>
<div class="abs" style="left:688px;top:309px;width:1px;height:17px;background:#36391d"></div>
<div class="abs" style="left:745px;top:309px;width:1px;height:17px;background:#36391d"></div>
<div class="abs" style="left:802px;top:309px;width:1px;height:17px;background:#36391d"></div>
<div class="abs" style="left:859px;top:309px;width:1px;height:17px;background:#36391d"></div>
<div class="abs" style="left:916px;top:309px;width:1px;height:17px;background:#36391d"></div>
<div class="abs" style="left:953px;top:309px;width:1px;height:17px;background:#36391d"></div>
<div class="abs" style="left:1024px;top:309px;width:1px;height:17px;background:#36391d"></div>
<div class="abs" style="left:1125px;top:309px;width:1px;height:17px;background:#36391d"></div>
<div class="abs" style="left:1226px;top:309px;width:1px;height:17px;background:#36391d"></div>
<div class="abs" style="left:1327px;top:309px;width:1px;height:17px;background:#36391d"></div>
<div class="abs" style="left:1384px;top:309px;width:1px;height:17px;background:#36391d"></div>
<div class="abs" style="left:1441px;top:309px;width:1px;height:17px;background:#36391d"></div>
<style>
#dlg{position:absolute;left:339px;top:204px;width:935px;height:549px;background:#fff;border-radius:8px;box-shadow:0 0 0 1px rgba(150,150,160,.45),0 1px 5px rgba(0,0,0,.18);overflow:hidden}
#dlg .tt{position:absolute;left:0;top:0;width:935px;height:25px;background:#f2f2f2}
#dtb{position:absolute;left:0;top:25px;width:718px;height:44px;background:#fff;border-right:1px solid #a0a0a0;border-bottom:1px solid #a0a0a0}
#dtb .btn svg{top:3px}
#dtb .btn .lb{top:24px}
.inp{position:absolute;background:#fff;border:1px solid;border-color:#7a7a7a #e6e6e6 #e6e6e6 #7a7a7a;box-shadow:inset 1px 1px 0 #b4b4b4}
.sb{position:absolute;background:#f0f0f0;border:1px solid;border-color:#fff #6e6e6e #6e6e6e #fff;box-shadow:inset -1px -1px 0 #a8a8a8}
.tri{position:absolute;width:0;height:0;border-left:4px solid transparent;border-right:4px solid transparent;border-top:4px solid #000}
.vt{position:absolute;background:#4a4a4a}
.dg{position:absolute;width:1px}
.amt{position:absolute;font:18px/18px "Liberation Serif",serif;letter-spacing:2px;white-space:nowrap;text-align:right}
.sh{position:absolute;top:170px;width:11px;height:17px;line-height:17px;text-align:center;font-size:11px;overflow:hidden}
</style>
<div id="dlg">
<div class="tt"><div class="abs" style="left:3px;top:4px;width:16px;height:16px"><svg viewBox="0 0 16 16" width="16" height="16"><defs><linearGradient id="gd" x1="0" y1="0" x2="1" y2="1"><stop offset="0" stop-color="#3aa0f0"/><stop offset="1" stop-color="#0a58c0"/></linearGradient></defs><path d="M3 0H13Q16 0 16 3V12L12 16H0V3Q0 0 3 0Z" fill="url(#gd)"/><path d="M8 2.4Q10.6 4 10.6 7.4Q10.6 10 8.8 10.8L8.6 14H7.4L7.2 10.8Q5.4 10 5.4 7.4Q5.4 4 8 2.4Z" fill="#fff"/><path d="M8 4V14M6.2 6.4L8 8L9.8 6.4M6.2 8.6L8 10L9.8 8.6" stroke="#2a80d8" stroke-width=".8" fill="none"/></svg></div><div class="t" style="left:25px;top:5px;color:#a2a2a2">记账凭证 - 审核</div><svg class="abs" style="left:915px;top:7px" width="11" height="11" viewBox="0 0 11 11"><path d="M.5 .5L10.5 10.5M10.5 .5L.5 10.5" stroke="#8c8c8c" stroke-width="1" fill="none"/></svg></div>
<div id="dtb">
<div class="abs" style="left:5px;top:2px;width:2px;height:39px;border-left:1px solid #b4b4b4;border-right:1px solid #e0e0e0"></div><div class="abs" style="left:8px;top:2px;width:2px;height:39px;border-left:1px solid #b4b4b4;border-right:1px solid #e0e0e0"></div>
<div class="btn " style="left:11px;width:30px"><svg viewBox="0 0 16 16" ><path d="M1.6 1.5H7.5L10.5 4.5V7M1.6 1.5V14.5H9.5" fill="none" stroke="#000" stroke-width="1.2"/><path d="M7.5 1.5V4.5H10.5" fill="none" stroke="#000" stroke-width="1"/><circle cx="9.6" cy="9.6" r="3.1" fill="#fff" stroke="#000" stroke-width="1.3"/><rect x="8.2" y="8" width="1.3" height="1.3" fill="#00e0e0"/><rect x="9.8" y="9.8" width="1.3" height="1.3" fill="#00e0e0"/><path d="M11.8 11.8L14.3 14.6" stroke="#000" stroke-width="1.8"/></svg><span class="lb">预览</span></div>
<div class="btn " style="left:41px;width:30px"><svg viewBox="0 0 16 16" ><path d="M5.2 1.5H14.4L12.4 6.5H3.2Z" fill="#fff" stroke="#000" stroke-width="1.1"/><path d="M6 3.3H12M5.3 5H11.3" stroke="#000" stroke-width="1"/><path d="M2.2 6.6H12.6L15.8 5.2 16.2 10.4 12.8 13.2H2.2Q0.6 13.2 0.6 11.5V8.2Q0.6 6.6 2.2 6.6Z" fill="#fff" stroke="#000" stroke-width="1.2"/><path d="M12.8 6.8V13" stroke="#000" stroke-width="1"/><path d="M1 10H12.5" stroke="#000" stroke-width="1.3"/><path d="M2 13.2V14.6H12.6L14.6 12.8" fill="none" stroke="#000" stroke-width="1.2"/><rect x="7" y="10.8" width="3.2" height="1.2" fill="#e8d800"/></svg><span class="lb">打印</span></div>
<div class="btn " style="left:71px;width:30px"><svg viewBox="0 0 16 16" ><path d="M2.5 1.6H10.8L13.6 4.4V15.5H2.5Z" fill="#fff" stroke="#000" stroke-width="1.2"/><path d="M10.6 1.8V4.6H13.4" fill="none" stroke="#000" stroke-width="1"/><path d="M4.7 2.2V15M11.2 4.8V15M3 3.6H10.4M3 13.4H13.2" stroke="#a000a0" stroke-width="1.1"/></svg><span class="lb">设置</span></div>
<div class="btn dis" style="left:101px;width:30px"><svg viewBox="0 0 16 16" ><path d="M0.6 2.6H15.4V13.4H5.6V15.6H0.6Z" fill="#fff" stroke="#a0a0a0" stroke-width="1.3"/><rect x="0.2" y="2" width="15.6" height="2.4" fill="#a0a0a0"/><path d="M0.6 7.6H15.4M5 10.6H15.4M5.4 4V8M10.2 4V13M6.4 11V13.4" stroke="#a0a0a0" stroke-width="1.3"/></svg><span class="lb">模板</span></div>
<div class="btn " style="left:131px;width:52px"><svg viewBox="0 0 16 16" ><rect x="0.7" y="1.2" width="14.8" height="10.4" fill="#fff" stroke="#000" stroke-width="1.2"/><rect x="0.2" y="0.2" width="15.8" height="2.8" fill="#000080"/><path d="M5.4 3V6M10.6 3V11.4M1 5.6H15.2M10.6 8.6H15.2" stroke="#808080" stroke-width="1"/><path d="M2.8 5.7H8L10.6 8.2V15.6H2.8Z" fill="#fff" stroke="#000" stroke-width="1.3"/><path d="M7.8 6V8.6H10.4" fill="none" stroke="#000" stroke-width="1.1"/></svg><span class="lb">保存模板</span></div>
<div class="btn " style="left:182px;width:30px"><svg viewBox="0 0 16 16" ><rect x="2.5" y="3.6" width="10.4" height="10.4" fill="#c4c4c4" stroke="#000" stroke-width="1.2"/><path d="M3.4 12.6H12V5" stroke="#808080" stroke-width="1.2" fill="none"/><path d="M5.8 6L7 11L15 3" stroke="#ff0000" stroke-width="1.7" fill="none"/><path d="M5.4 5.6L8 9.6L6.8 11.4Z" fill="#ff0000"/></svg><span class="lb">选项</span></div>
<div class="btn " style="left:217px;width:30px"><svg viewBox="0 0 16 16" ><rect x="5" y="3" width="1.3" height="11" fill="#000"/><path d="M6.6 8.5L12.2 3V14Z" fill="#000"/></svg><span class="lb">第一</span></div>
<div class="btn " style="left:247px;width:30px"><svg viewBox="0 0 16 16" ><path d="M4.8 8.5L10.8 3V14Z" fill="#000"/></svg><span class="lb">上一</span></div>
<div class="btn " style="left:277px;width:30px"><svg viewBox="0 0 16 16" ><path d="M11.2 8.5L5.2 3V14Z" fill="#000"/></svg><span class="lb">下一</span></div>
<div class="btn " style="left:307px;width:30px"><svg viewBox="0 0 16 16" ><rect x="10.2" y="3" width="1.3" height="11" fill="#000"/><path d="M10 8.5L4.4 3V14Z" fill="#000"/></svg><span class="lb">最后</span></div>
<div class="btn " style="left:343px;width:30px"><svg viewBox="0 0 16 16" ><defs><linearGradient id="gj" x1="0" y1="0" x2="0" y2="1"><stop offset="0" stop-color="#c8c8c8"/><stop offset=".45" stop-color="#808080"/><stop offset=".5" stop-color="#000"/><stop offset="1" stop-color="#000"/></linearGradient></defs><path d="M1.4 8.6L8.6 1.6V6H16V11.2H8.6V15.4Z" fill="url(#gj)"/></svg><span class="lb">跳转</span></div>
<div class="btn " style="left:378px;width:78px"><svg viewBox="0 0 16 16" ><rect x="1.5" y="3.5" width="10.2" height="8.2" fill="#f4ec00" stroke="#000" stroke-width="1.1"/><rect x="1" y="3" width="11.2" height="2.1" fill="#0000ff"/><path d="M1.5 7.9H11.7M5.4 5V11.6" stroke="#000" stroke-width="1"/><path d="M5.6 9.2L9.6 14.4L12.6 10.4" stroke="#000090" stroke-width="2" fill="none"/><path d="M12.4 10.6L17 4.8" stroke="#000090" stroke-width="1.1" stroke-dasharray="1.4 .6" fill="none"/></svg><span class="lb">审核/反审核</span></div>
<div class="btn " style="left:461px;width:30px"><svg viewBox="0 0 16 16" ><path d="M1.8 3.2H15.6V10.6L10.6 15.4H1.8Z" fill="#fff" stroke="#000" stroke-width="1.2"/><path d="M15.4 10.8H11V15" fill="none" stroke="#000" stroke-width="1"/><path d="M11 15.2L15.6 10.8" stroke="#404040" stroke-width="1.6"/><path d="M4.2 9V2.2Q4.2 0.8 5.6 0.8Q7 0.8 7 2.2V11.4Q7 12.8 5.8 12.8Q4.2 12.8 4.2 11.2V9" fill="none" stroke="#000" stroke-width="1.1"/><path d="M8.2 7H14.6M7.6 5.6V11.6" stroke="#606060" stroke-width="1"/></svg><span class="lb">附件</span></div>
<div class="btn " style="left:491px;width:30px"><svg viewBox="0 0 16 16" ><rect x="4.6" y="3.6" width="3.6" height="12" fill="#fff" stroke="#000090" stroke-width="1.3"/><path d="M5.2 6.5H8M5.2 9H8M5.2 11.5H8M5.2 14H9" stroke="#009090" stroke-width="1"/><path d="M7.6 2.4L11 6.4V15.6L7.6 12.2Z" fill="#7ef4f4" stroke="#000" stroke-width="1"/><path d="M11 6.4L13.8 2V12L11 15.6Z" fill="#7ef4f4" stroke="#000" stroke-width=".9"/><path d="M14.4 1V12.4L11.6 15.8H4.2" fill="none" stroke="#000090" stroke-width="1.5"/></svg><span class="lb">获取</span></div>
<div class="btn " style="left:521px;width:30px"><svg viewBox="0 0 16 16" ><path d="M5.4 2.5H11.8L7.8 11H1.4Z" fill="#fff" stroke="#000" stroke-width="1.1" stroke-dasharray="5 .8"/><path d="M10.6 4.5H17L13.2 13.5H5.6Z" fill="#fff" stroke="#000" stroke-width="1.1" stroke-dasharray="5 .8"/><text x="8.8" y="12.8" font-family="Liberation Sans,sans-serif" font-weight="bold" font-size="9" fill="#008000">$</text></svg><span class="lb">变换</span></div>
<div class="btn " style="left:551px;width:30px"><svg viewBox="0 0 16 16" ><path d="M3.6 1H6.4V4L7.4 6H9.6L10.6 4V1H13.4V4.4L15.6 7.4V13.6H11V9.4H6V13.6H0.6V7.4L3.6 4.4Z" fill="#000"/><rect x="4.4" y="2" width="1.1" height="1.6" fill="#fff"/><rect x="11.4" y="2" width="1.1" height="1.6" fill="#fff"/><rect x="2.4" y="7" width="1.1" height="3" fill="#fff"/><rect x="9.4" y="6.6" width="1.1" height="2.4" fill="#fff"/><rect x="2.4" y="11.4" width="1.1" height="1.2" fill="#fff"/><rect x="11.8" y="10.6" width="1.1" height="2" fill="#fff"/></svg><span class="lb">明细</span></div>
<div class="btn " style="left:581px;width:30px"><svg viewBox="0 0 16 16" ><rect x="0.5" y="0.5" width="15" height="15" fill="#fff" stroke="#000" stroke-width="1"/><path d="M2.5 3.5H5M2.5 5.5H5M3 3V6M6.5 3V6M9 3V6M6.5 4.5H9M10.5 3.5H13.5M10.5 5.5H13.5M12 3V6" stroke="#ff0000" stroke-width="1" fill="none"/><path d="M2 8.5H14M2 10.5H14M2 12.5H14" stroke="#000" stroke-width="1" stroke-dasharray="3 1.5" shape-rendering="crispEdges"/><path d="M2 14H14" stroke="#00a000" stroke-width="1" stroke-dasharray="3 1.5" shape-rendering="crispEdges"/></svg><span class="lb">余额</span></div>
<div class="btn " style="left:611px;width:38px"><svg viewBox="0 0 16 16" ><rect x="1.6" y="1.6" width="13.6" height="13.4" fill="#fff" stroke="#000" stroke-width="1.2"/><rect x="1" y="1" width="14.8" height="3.6" fill="#000090"/><rect x="2.4" y="2" width="4" height="1.6" fill="#f0e800"/><rect x="7.6" y="2" width="6.8" height="1.6" fill="#909090"/><path d="M9.4 6.6H13.4M9.4 8.6H13.4M9.4 10.6H13.4M9.4 12.6H13.4" stroke="#808080" stroke-width="1.1"/></svg><span class="lb">序时簿</span></div>
<div class="btn dis" style="left:650px;width:30px"><svg viewBox="0 0 16 16" ><rect x="1.4" y="4.2" width="13" height="3.8" fill="#a0a0a0"/><rect x="1.4" y="10.2" width="13" height="3.8" fill="#a0a0a0"/></svg><span class="lb">平衡</span></div>
<div class="btn " style="left:685px;width:30px"><svg viewBox="0 0 16 16" ><path d="M2.2 11.4V1.6H10.4V12.4H14.6" fill="#fff" stroke="#000" stroke-width="1.4"/><path d="M2.4 2.6L7 5V15.6L2.4 12.2Z" fill="#808000" stroke="#000" stroke-width="1.1"/><path d="M12.2 7L16.6 3V11Z" fill="#000090"/></svg><span class="lb">关闭</span></div>
<div class="sep" style="left:213px;top:3px;height:38px"></div>
<div class="sep" style="left:339px;top:3px;height:38px"></div>
<div class="sep" style="left:375px;top:3px;height:38px"></div>
<div class="sep" style="left:457px;top:3px;height:38px"></div>
<div class="sep" style="left:681px;top:3px;height:38px"></div>
</div>
<div class="abs" id="bigt" style="left:371.5px;top:72px;width:200px;height:36px;text-align:center;white-space:nowrap;font:500 26px/36px 'Noto Sans CJK SC','WenQuanYi Zen Hei',sans-serif;letter-spacing:1px;transform:scale(1.33,.86);transform-origin:50% 50%">记账凭证</div>
<div class="inp" style="left:20px;top:122px;width:50px;height:19px"></div>
<div class="t" style="left:24px;top:124px;">收</div>
<div class="sb" style="left:52px;top:124px;width:16px;height:15px"><div class="tri" style="left:3px;top:5px"></div></div>
<div class="t" style="left:75px;top:125px;">字</div>
<div class="inp" style="left:91px;top:122px;width:40px;height:19px"></div>
<div class="t" style="left:108px;top:124px;color:#8a8a8a"><span class="m">3</span></div>
<div class="sb" style="left:132px;top:122px;width:17px;height:10px"></div><div class="sb" style="left:132px;top:132px;width:17px;height:9px"></div>
<div class="tri" style="left:138px;top:126px;border-width:0 2px 2px 2px;border-color:transparent transparent #9a9a9a transparent;border-style:solid"></div>
<div class="tri" style="left:138px;top:136px;border-width:2px 2px 0 2px;border-color:#9a9a9a transparent transparent transparent;border-style:solid"></div>
<div class="t" style="left:153px;top:125px;">号</div>
<div class="t" style="left:369px;top:125px;">日期：</div>
<div class="inp" style="left:405px;top:122px;width:86px;height:19px"></div>
<div class="t" style="left:408px;top:124px;"><span class="m">2008-02-20</span></div>
<div class="sb" style="left:473px;top:124px;width:16px;height:15px"><div class="tri" style="left:3px;top:5px"></div></div>
<div class="t" style="left:504px;top:125px;word-spacing:3px">第 <span class="m">2</span> 期</div>
<div class="t" style="left:798px;top:101px;">顺序号</div>
<div class="inp" style="left:839px;top:98px;width:65px;height:19px"></div>
<div class="t" style="left:839px;top:100px;width:62px;text-align:right"><span class="m">76</span></div>
<div class="t" style="left:798px;top:125px;">附单据</div>
<div class="inp" style="left:839px;top:122px;width:48px;height:19px"></div>
<div class="t" style="left:839px;top:124px;width:45px;text-align:right"><span class="m">0</span></div>
<div class="sb" style="left:888px;top:122px;width:17px;height:10px"></div><div class="sb" style="left:888px;top:132px;width:17px;height:9px"></div>
<div class="tri" style="left:894px;top:125px;border-width:0 2.5px 3px 2.5px;border-color:transparent transparent #000 transparent;border-style:solid"></div>
<div class="tri" style="left:894px;top:135px;border-width:3px 2.5px 0 2.5px;border-color:#000 transparent transparent transparent;border-style:solid"></div>
<div class="t" style="left:908px;top:125px;">张</div>
<div class="abs" style="left:601px;top:170px;width:1px;height:17px;background:#1fb6d0"></div>
<div class="abs" style="left:612px;top:170px;width:1px;height:17px;background:#1fb6d0"></div>
<div class="abs" style="left:623px;top:170px;width:1px;height:17px;background:#8a8a8a"></div>
<div class="abs" style="left:634px;top:170px;width:1px;height:17px;background:#1fb6d0"></div>
<div class="abs" style="left:645px;top:170px;width:1px;height:17px;background:#1fb6d0"></div>
<div class="abs" style="left:656px;top:170px;width:1px;height:17px;background:#8a8a8a"></div>
<div class="abs" style="left:667px;top:170px;width:1px;height:17px;background:#1fb6d0"></div>
<div class="abs" style="left:678px;top:170px;width:1px;height:17px;background:#1fb6d0"></div>
<div class="abs" style="left:689px;top:170px;width:1px;height:17px;background:#8a8a8a"></div>
<div class="abs" style="left:700px;top:170px;width:1px;height:17px;background:#1fb6d0"></div>
<div class="abs" style="left:711px;top:170px;width:1px;height:17px;background:#1fb6d0"></div>
<div class="abs" style="left:722px;top:170px;width:1px;height:17px;background:#ff0000"></div>
<div class="abs" style="left:733px;top:170px;width:1px;height:17px;background:#1fb6d0"></div>
<div class="abs" style="left:756px;top:170px;width:1px;height:17px;background:#1fb6d0"></div>
<div class="abs" style="left:767px;top:170px;width:1px;height:17px;background:#1fb6d0"></div>
<div class="abs" style="left:778px;top:170px;width:1px;height:17px;background:#8a8a8a"></div>
<div class="abs" style="left:789px;top:170px;width:1px;height:17px;background:#1fb6d0"></div>
<div class="abs" style="left:800px;top:170px;width:1px;height:17px;background:#1fb6d0"></div>
<div class="abs" style="left:811px;top:170px;width:1px;height:17px;background:#8a8a8a"></div>
<div class="abs" style="left:822px;top:170px;width:1px;height:17px;background:#1fb6d0"></div>
<div class="abs" style="left:833px;top:170px;width:1px;height:17px;background:#1fb6d0"></div>
<div class="abs" style="left:844px;top:170px;width:1px;height:17px;background:#8a8a8a"></div>
<div class="abs" style="left:855px;top:170px;width:1px;height:17px;background:#1fb6d0"></div>
<div class="abs" style="left:866px;top:170px;width:1px;height:17px;background:#1fb6d0"></div>
<div class="abs" style="left:877px;top:170px;width:1px;height:17px;background:#ff0000"></div>
<div class="abs" style="left:888px;top:170px;width:1px;height:17px;background:#1fb6d0"></div>
<div class="abs" style="left:601px;top:188px;width:1px;height:275px;background:#74d2b3"></div>
<div class="abs" style="left:612px;top:188px;width:1px;height:275px;background:#74d2b3"></div>
<div class="abs" style="left:623px;top:188px;width:1px;height:275px;background:#8a8a8a"></div>
<div class="abs" style="left:634px;top:188px;width:1px;height:275px;background:#74d2b3"></div>
<div class="abs" style="left:645px;top:188px;width:1px;height:275px;background:#74d2b3"></div>
<div class="abs" style="left:656px;top:188px;width:1px;height:275px;background:#8a8a8a"></div>
<div class="abs" style="left:667px;top:188px;width:1px;height:275px;background:#74d2b3"></div>
<div class="abs" style="left:678px;top:188px;width:1px;height:275px;background:#74d2b3"></div>
<div class="abs" style="left:689px;top:188px;width:1px;height:275px;background:#8a8a8a"></div>
<div class="abs" style="left:700px;top:188px;width:1px;height:275px;background:#74d2b3"></div>
<div class="abs" style="left:711px;top:188px;width:1px;height:275px;background:#74d2b3"></div>
<div class="abs" style="left:722px;top:188px;width:1px;height:275px;background:#ff0000"></div>
<div class="abs" style="left:733px;top:188px;width:1px;height:275px;background:#74d2b3"></div>
<div class="abs" style="left:756px;top:188px;width:1px;height:275px;background:#74d2b3"></div>
<div class="abs" style="left:767px;top:188px;width:1px;height:275px;background:#74d2b3"></div>
<div class="abs" style="left:778px;top:188px;width:1px;height:275px;background:#8a8a8a"></div>
<div class="abs" style="left:789px;top:188px;width:1px;height:275px;background:#74d2b3"></div>
<div class="abs" style="left:800px;top:188px;width:1px;height:275px;background:#74d2b3"></div>
<div class="abs" style="left:811px;top:188px;width:1px;height:275px;background:#8a8a8a"></div>
<div class="abs" style="left:822px;top:188px;width:1px;height:275px;background:#74d2b3"></div>
<div class="abs" style="left:833px;top:188px;width:1px;height:275px;background:#74d2b3"></div>
<div class="abs" style="left:844px;top:188px;width:1px;height:275px;background:#8a8a8a"></div>
<div class="abs" style="left:855px;top:188px;width:1px;height:275px;background:#74d2b3"></div>
<div class="abs" style="left:866px;top:188px;width:1px;height:275px;background:#74d2b3"></div>
<div class="abs" style="left:877px;top:188px;width:1px;height:275px;background:#ff0000"></div>
<div class="abs" style="left:888px;top:188px;width:1px;height:275px;background:#74d2b3"></div>
<div class="abs" style="left:13px;top:146px;width:909px;height:1px;background:#727272"></div>
<div class="abs" style="left:13px;top:525px;width:909px;height:1px;background:#727272"></div>
<div class="abs" style="left:13px;top:146px;width:1px;height:380px;background:#727272"></div>
<div class="abs" style="left:921px;top:146px;width:1px;height:380px;background:#727272"></div>
<div class="abs" style="left:157px;top:146px;width:1px;height:271px;background:#727272"></div>
<div class="abs" style="left:590px;top:187px;width:2px;height:276px;background:#5e5e5e"></div>
<div class="abs" style="left:744px;top:187px;width:2px;height:276px;background:#5e5e5e"></div>
<div class="abs" style="left:899px;top:187px;width:1px;height:276px;background:#727272"></div>
<div class="abs" style="left:13px;top:233px;width:887px;height:1px;background:#727272"></div>
<div class="abs" style="left:13px;top:279px;width:887px;height:1px;background:#727272"></div>
<div class="abs" style="left:13px;top:325px;width:887px;height:1px;background:#727272"></div>
<div class="abs" style="left:13px;top:371px;width:887px;height:1px;background:#727272"></div>
<div class="abs" style="left:13px;top:417px;width:887px;height:1px;background:#727272"></div>
<div class="abs" style="left:13px;top:187px;width:887px;height:1px;background:#727272"></div>
<div class="abs" style="left:13px;top:463px;width:909px;height:1px;background:#727272"></div>
<div class="abs" style="left:590px;top:146px;width:1px;height:42px;background:#000"></div>
<div class="abs" style="left:744px;top:146px;width:1px;height:42px;background:#000"></div>
<div class="abs" style="left:899px;top:146px;width:1px;height:42px;background:#000"></div>
<div class="abs" style="left:590px;top:169px;width:310px;height:1px;background:#000"></div>
<div class="t" style="left:55px;top:160px;word-spacing:18.5px">摘 要</div>
<div class="t" style="left:330px;top:158px;word-spacing:8.6px">会 计 科 目</div>
<div class="t" style="left:590px;top:151px;width:154px;text-align:center">借方金额</div>
<div class="t" style="left:745px;top:151px;width:154px;text-align:center">贷方金额</div>
<div class="sh" style="left:591px;top:170px">千</div>
<div class="sh" style="left:602px;top:170px">百</div>
<div class="sh" style="left:613px;top:170px">十</div>
<div class="sh" style="left:624px;top:170px">亿</div>
<div class="sh" style="left:635px;top:170px">千</div>
<div class="sh" style="left:646px;top:170px">百</div>
<div class="sh" style="left:657px;top:170px">十</div>
<div class="sh" style="left:668px;top:170px">万</div>
<div class="sh" style="left:679px;top:170px">千</div>
<div class="sh" style="left:690px;top:170px">百</div>
<div class="sh" style="left:701px;top:170px">十</div>
<div class="sh" style="left:712px;top:170px">元</div>
<div class="sh" style="left:723px;top:170px">角</div>
<div class="sh" style="left:734px;top:170px">分</div>
<div class="sh" style="left:746px;top:170px">千</div>
<div class="sh" style="left:757px;top:170px">百</div>
<div class="sh" style="left:768px;top:170px">十</div>
<div class="sh" style="left:779px;top:170px">亿</div>
<div class="sh" style="left:790px;top:170px">千</div>
<div class="sh" style="left:801px;top:170px">百</div>
<div class="sh" style="left:812px;top:170px">十</div>
<div class="sh" style="left:823px;top:170px">万</div>
<div class="sh" style="left:834px;top:170px">千</div>
<div class="sh" style="left:845px;top:170px">百</div>
<div class="sh" style="left:856px;top:170px">十</div>
<div class="sh" style="left:867px;top:170px">元</div>
<div class="sh" style="left:878px;top:170px">角</div>
<div class="sh" style="left:889px;top:170px">分</div>
<div class="t" style="left:159px;top:189px;word-spacing:2px"><span class="m">6051</span> 其他业务收入</div>
<div class="amt" style="left:590px;top:203px;width:155.5px">10000</div>
<div class="t" style="left:159px;top:235px;word-spacing:2px"><span class="m">1132</span> 应收利息</div>
<div class="amt" style="left:745px;top:249px;width:155.5px">10000</div>
<div class="t" style="left:159px;top:281px;word-spacing:2px"><span class="m">1401</span> 材料采购</div>
<div class="amt" style="left:590px;top:295px;width:155.5px">150000</div>
<div class="t" style="left:159px;top:327px;word-spacing:2px"><span class="m">1402</span> 在途物资</div>
<div class="amt" style="left:745px;top:341px;width:155.5px">100000</div>
<div class="t" style="left:159px;top:373px;word-spacing:2px"><span class="m">1321</span> 代理业务资产</div>
<div class="amt" style="left:745px;top:387px;width:155.5px">50000</div>
<div class="amt" style="left:590px;top:433px;width:155.5px">160000</div>
<div class="amt" style="left:745px;top:433px;width:155.5px">160000</div>
<div class="t" style="left:16px;top:434.5px;font:bold 12px/14px 'Liberation Mono','Noto Sans CJK SC',monospace;letter-spacing:.6px">合 计: 壹仟陆佰元整</div>
<div class="abs" style="left:902px;top:188px;width:17px;height:229px;background:#f3f3f3"></div>
<div class="abs" style="left:902px;top:188px;width:17px;height:16px;background:#eaeaea"></div>
<div class="abs" style="left:902px;top:400px;width:17px;height:16px;background:#eaeaea"></div>
<div class="tri" style="left:906px;top:194px;border-width:0 4px 4px 4px;border-color:transparent transparent #a8a8a8 transparent;border-style:solid"></div>
<div class="tri" style="left:906px;top:406px;border-width:4px 4px 0 4px;border-color:#a8a8a8 transparent transparent transparent;border-style:solid"></div>
<div class="t" style="left:28px;top:532px;">审核：</div>
<div class="t" style="left:343px;top:531px;">过账：</div>
<div class="t" style="left:681px;top:531px">制单：<span class="m">Manager</span></div>
</div>
<svg class="abs" style="left:0;top:0;pointer-events:none" width="1429" height="784" viewBox="0 0 1429 784">
<path d="M853.1 121.1L572.2 86.4L571.8 90.2L852.9 123.5Z" fill="#ff0000"/>
<path d="M542 85.3L577 82L575 94.2Z" fill="#ff0000"/>
<path d="M936.2 193.1L829.5 222.6L830.5 226.4L936.8 195.5Z" fill="#ff0000"/>
<path d="M801 234.4L830.5 217L837 230Z" fill="#ff0000"/>
</svg>

</body></html>
